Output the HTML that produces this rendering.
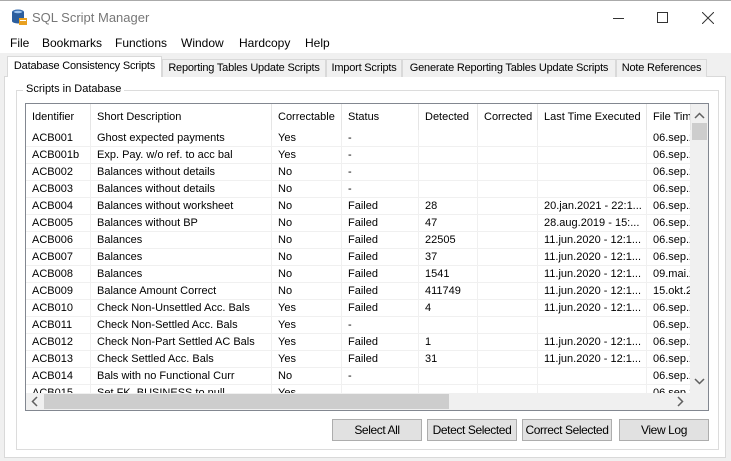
<!DOCTYPE html>
<html><head><style>
*{margin:0;padding:0;box-sizing:border-box}
body{width:731px;height:461px;overflow:hidden;background:#f0f0f0;font-family:"Liberation Sans",Arial,sans-serif;font-size:11px;color:#000;position:relative}
.a{position:absolute}
#title{left:0;top:0;width:731px;height:33px;background:#fff;border-top:1px solid #aaa}
#menu{left:0;top:33px;width:731px;height:20px;background:#fff;font-size:12px}
#menu span{position:absolute;top:3px}
.tab{position:absolute;height:18px;top:59px;border:1px solid #d9d9d9;border-bottom:none;background:#f0f0f0;font-size:11px;line-height:17px;text-align:center;white-space:nowrap;letter-spacing:-0.2px}
#panel{left:4px;top:76px;width:722px;height:382px;background:#fff;border:1px solid #d9d9d9}
#grp{left:16px;top:90px;width:703px;height:360px;border:1px solid #dcdcdc}
#lv{left:25px;top:103px;width:684px;height:308px;border:1px solid #828790;background:#fff;overflow:hidden}
.hd{position:absolute;top:0;height:26px;line-height:26px;padding-left:6px;border-right:1px solid #e5e5e5;white-space:nowrap;overflow:hidden}
.row{position:absolute;left:0;height:17px;width:665px;border-bottom:1px solid #f0f0f0}
.c{position:absolute;top:0;height:17px;line-height:17px;padding-left:6px;border-right:1px solid #f0f0f0;white-space:nowrap;overflow:hidden}
.btn{position:absolute;top:419px;height:22px;background:#e1e1e1;border:1px solid #adadad;font-size:12px;line-height:20px;text-align:center;white-space:nowrap;letter-spacing:-0.4px}
</style></head><body>
<div class="a" id="title">
 <svg class="a" style="left:10px;top:7px" width="18" height="18" viewBox="0 0 18 18"><ellipse cx="8" cy="4" rx="6" ry="2.5" fill="#3a6fb0"/><rect x="2" y="4" width="12" height="9" fill="#2b5e9e"/><ellipse cx="8" cy="13" rx="6" ry="2.5" fill="#2b5e9e"/><ellipse cx="8" cy="4" rx="4" ry="1.3" fill="#9cc3ee"/><rect x="9" y="10" width="8" height="7" fill="#e8a020"/><rect x="10" y="12" width="6" height="1" fill="#fff"/></svg>
 <div class="a" style="left:32px;top:9px;font-size:13px;color:#777">SQL Script Manager</div>
 <div class="a" style="left:613px;top:17px;width:11px;height:1px;background:#333"></div>
 <div class="a" style="left:657px;top:11px;width:11px;height:11px;border:1px solid #333"></div>
 <svg class="a" style="left:702px;top:11px" width="12" height="12"><path d="M0 0L12 12M12 0L0 12" stroke="#333" stroke-width="1"/></svg>
</div>
<div class="a" id="menu"><span style="left:10px">File</span><span style="left:42px">Bookmarks</span><span style="left:115px">Functions</span><span style="left:181px">Window</span><span style="left:239px">Hardcopy</span><span style="left:305px">Help</span></div>
<div class="a" id="panel"></div>
<div class="tab" style="left:7px;top:56px;height:21px;width:155px;background:#fff;line-height:19px">Database Consistency Scripts</div>
<div class="tab" style="left:162px;width:164px">Reporting Tables Update Scripts</div>
<div class="tab" style="left:326px;width:76px">Import Scripts</div>
<div class="tab" style="left:402px;width:214px">Generate Reporting Tables Update Scripts</div>
<div class="tab" style="left:616px;width:91px">Note References</div>
<div class="a" id="grp"></div>
<div class="a" style="left:23px;top:83px;background:#fff;padding:0 3px;font-size:11px">Scripts in Database</div>
<div class="a" id="lv">
 <div class="hd" style="left:0;width:65px">Identifier</div>
 <div class="hd" style="left:65px;width:181px">Short Description</div>
 <div class="hd" style="left:246px;width:70px">Correctable</div>
 <div class="hd" style="left:316px;width:77px">Status</div>
 <div class="hd" style="left:393px;width:59px">Detected</div>
 <div class="hd" style="left:452px;width:60px">Corrected</div>
 <div class="hd" style="left:512px;width:109px">Last Time Executed</div>
 <div class="hd" style="left:621px;width:44px">File Time</div>
 <div id="rows"></div>
 <div class="a" style="left:665px;top:0;width:17px;height:289px;background:#f0f0f0"></div>
 <div class="a" style="left:666px;top:19px;width:15px;height:17px;background:#cdcdcd"></div>
 <svg class="a" style="left:668px;top:8px" width="11" height="7"><path d="M1 6L5.5 1.5L10 6" stroke="#606060" fill="none" stroke-width="1.5"/></svg>
 <svg class="a" style="left:668px;top:274px" width="11" height="7"><path d="M1 1L5.5 5.5L10 1" stroke="#606060" fill="none" stroke-width="1.5"/></svg>
 <div class="a" style="left:0;top:289px;width:682px;height:17px;background:#f0f0f0"></div>
 <div class="a" style="left:18px;top:290px;width:405px;height:15px;background:#cdcdcd"></div>
 <svg class="a" style="left:5px;top:292px" width="7" height="11"><path d="M6 1L1.5 5.5L6 10" stroke="#606060" fill="none" stroke-width="1.5"/></svg>
 <svg class="a" style="left:651px;top:292px" width="7" height="11"><path d="M1 1L5.5 5.5L1 10" stroke="#606060" fill="none" stroke-width="1.5"/></svg>
</div>
<div class="btn" style="left:332px;width:90px">Select All</div>
<div class="btn" style="left:427px;width:90px">Detect Selected</div>
<div class="btn" style="left:522px;width:90px">Correct Selected</div>
<div class="btn" style="left:619px;width:90px">View Log</div>
<script>
var d=[["ACB001","Ghost expected payments","Yes","-","","","","06.sep.2"],
["ACB001b","Exp. Pay. w/o ref. to acc bal","Yes","-","","","","06.sep.2"],
["ACB002","Balances without details","No","-","","","","06.sep.2"],
["ACB003","Balances without details","No","-","","","","06.sep.2"],
["ACB004","Balances without worksheet","No","Failed","28","","20.jan.2021 - 22:1...","06.sep.2"],
["ACB005","Balances without BP","No","Failed","47","","28.aug.2019 - 15:...","06.sep.2"],
["ACB006","Balances","No","Failed","22505","","11.jun.2020 - 12:1...","06.sep.2"],
["ACB007","Balances","No","Failed","37","","11.jun.2020 - 12:1...","06.sep.2"],
["ACB008","Balances","No","Failed","1541","","11.jun.2020 - 12:1...","09.mai.2"],
["ACB009","Balance Amount Correct","No","Failed","411749","","11.jun.2020 - 12:1...","15.okt.2"],
["ACB010","Check Non-Unsettled Acc. Bals","Yes","Failed","4","","11.jun.2020 - 12:1...","06.sep.2"],
["ACB011","Check Non-Settled Acc. Bals","Yes","-","","","","06.sep.2"],
["ACB012","Check Non-Part Settled AC Bals","Yes","Failed","1","","11.jun.2020 - 12:1...","06.sep.2"],
["ACB013","Check Settled Acc. Bals","Yes","Failed","31","","11.jun.2020 - 12:1...","06.sep.2"],
["ACB014","Bals with no Functional Curr","No","-","","","","06.sep.2"],
["ACB015","Set FK_BUSINESS to null","Yes","","","","","06.sep.2"]];
var L=[[0,65],[65,181],[246,70],[316,77],[393,59],[452,60],[512,109],[621,44]];
var h="";d.forEach(function(r,i){h+='<div class="row" style="top:'+(26+i*17)+'px">';r.forEach(function(t,j){h+='<div class="c" style="left:'+L[j][0]+'px;width:'+L[j][1]+'px">'+t+'</div>'});h+='</div>'});
document.getElementById("rows").innerHTML=h;
</script>
</body></html>
